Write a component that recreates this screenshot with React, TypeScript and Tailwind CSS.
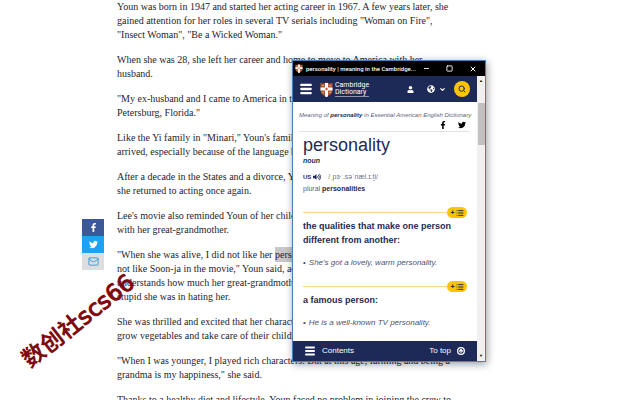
import React from 'react';
import { FaFacebookF, FaTwitter, FaUser, FaVolumeUp, FaGlobeAmericas } from 'react-icons/fa';
import { Mail, Search, ChevronDown, Minus, Square, X, Menu, List, CircleArrowUp } from 'lucide-react';

interface ParagraphProps {
  lines: React.ReactNode[];
}

const paragraphs: React.ReactNode[][] = [
  [
    'Youn was born in 1947 and started her acting career in 1967. A few years later, she',
    'gained attention for her roles in several TV serials including "Woman on Fire",',
    '"Insect Woman", "Be a Wicked Woman."',
  ],
  ['When she was 28, she left her career and home to move to America with her', 'husband.'],
  ['"My ex-husband and I came to America in the 1970s and lived in St.', 'Petersburg, Florida."'],
  ['Like the Yi family in "Minari," Youn\'s family had a hard time when they', 'arrived, especially because of the language barrier.'],
  ['After a decade in the States and a divorce, Youn went home, where', 'she returned to acting once again.'],
  ["Lee's movie also reminded Youn of her childhood and her time", 'with her great-grandmother.'],
  [
    <>"When she was alive, I did not like her <mark className="bg-[#c8c8c8] py-[2px] text-inherit">personality</mark>. She was</>,
    'not like Soon-ja in the movie," Youn said, adding that she now',
    'understands how much her great-grandmother loved her, and how',
    'stupid she was in hating her.',
  ],
  ['She was thrilled and excited that her character would help them', 'grow vegetables and take care of their children.'],
  ['"When I was younger, I played rich characters. But at this age, farming and being a', 'grandma is my happiness," she said.'],
  ['Thanks to a healthy diet and lifestyle, Youn faced no problem in joining the crew to'],
];

const senses = [
  { definition: 'the qualities that make one person different from another:', example: "She's got a lovely, warm personality." },
  { definition: 'a famous person:', example: 'He is a well-known TV personality.' },
];

function Paragraph({ lines }: ParagraphProps) {
  return (
    <p className="whitespace-nowrap">
      {lines.map((line, i) => (
        <span key={i} className="block">{line}</span>
      ))}
    </p>
  );
}

function Shield({ className }: { className: string }) {
  return (
    <svg viewBox="0 0 26 30" className={className} aria-hidden="true">
      <path d="M1 2q6 2 12-1 6 3 12 1v14c0 7-5 11-12 13C6 27 1 23 1 16z" fill="#b4552f" />
      <path d="M10 2h6v27l-3 1-3-1zM1 11h24v6H1z" fill="#fff" />
      <path d="M13 11l3 3-3 3-3-3z" fill="#b4552f" />
      <path d="M4 6h4v2H4zM18 6h4v2h-4zM4 20h4v2H4zM18 20h4v2h-4z" fill="#dc9673" />
    </svg>
  );
}

function ShareRail() {
  return (
    <nav aria-label="Share" className="mt-[219px] flex w-[22px] shrink-0 flex-col self-start">
      <a href="#facebook" aria-label="Facebook" className="flex h-[17px] items-center justify-center bg-[#3b5998] text-white">
        <FaFacebookF className="size-[9px]" />
      </a>
      <a href="#twitter" aria-label="Twitter" className="flex h-[17px] items-center justify-center bg-[#1da1f2] text-white">
        <FaTwitter className="size-[9px]" />
      </a>
      <a href="#email" aria-label="Email" className="flex h-[17px] items-center justify-center bg-[#dedede] text-[#2f9bdc]">
        <Mail className="size-[11px]" strokeWidth={2} />
      </a>
    </nav>
  );
}

function TitleBar() {
  return (
    <div className="flex h-[15px] items-center bg-black pl-[2px] text-white">
      <Shield className="mr-[3px] h-[9px] w-2 shrink-0" />
      <span className="min-w-0 grow whitespace-nowrap font-[Roboto,sans-serif] text-[6px] font-medium">personality | meaning in the Cambridge...</span>
      <div className="flex shrink-0 gap-4 pr-2">
        <button aria-label="Minimize"><Minus className="size-[7px]" strokeWidth={3} /></button>
        <button aria-label="Maximize"><Square className="size-[7px]" strokeWidth={3} /></button>
        <button aria-label="Close"><X className="size-2" strokeWidth={3} /></button>
      </div>
    </div>
  );
}

function SiteHeader() {
  return (
    <header className="flex h-[26px] items-center bg-[#1d2a57] pl-[6px] pr-[7px] text-white">
      <button aria-label="Menu"><Menu className="size-[14px]" strokeWidth={4} /></button>
      <a href="#home" className="ml-[7px] flex items-center gap-[2px]">
        <Shield className="h-[15px] w-[13px]" />
        <span className="font-[Roboto,sans-serif] text-[7px] leading-[7px]">
          <span className="block">Cambridge</span>
          <span className="block border-b border-[#8b93ad]">Dictionary</span>
        </span>
      </a>
      <div className="ml-auto flex items-center">
        <button aria-label="Log in" className="mr-[13px]"><FaUser className="size-[7px]" /></button>
        <button aria-label="Language" className="mr-1 flex items-center gap-1">
          <FaGlobeAmericas className="size-2" />
          <ChevronDown className="size-[7px]" strokeWidth={4} />
        </button>
        <button aria-label="Search" className="ml-1 flex size-4 items-center justify-center rounded-full bg-[#fec400] text-[#1d2a57]">
          <Search className="size-2" strokeWidth={3} />
        </button>
      </div>
    </header>
  );
}

function DictionaryWindow() {
  return (
    <section
      aria-label="Cambridge Dictionary"
      className="absolute left-[292px] top-[60px] w-[194px] border border-[#4c7fb5] bg-white font-['Liberation_Sans',sans-serif] text-[#1d2a57] shadow-[1px_2px_8px_rgba(0,0,0,0.4)]"
    >
      <TitleBar />
      <div className="flex">
        <div className="min-w-0 grow">
          <SiteHeader />
          <main className="h-[239px] overflow-hidden pl-[10px] pr-[7px] pt-[9px]">
            <div className="-ml-1 whitespace-nowrap text-[6px] italic leading-[8px] text-[#5b6380]">
              Meaning of <b className="text-[#1d2a57]">personality</b> in Essential American English Dictionary
            </div>
            <div className="-ml-1 flex h-[13px] justify-end gap-[11px] border-b border-[#e2e2e2] pr-1 pt-[2px] text-black">
              <a href="#fb" aria-label="Share on Facebook"><FaFacebookF className="size-2" /></a>
              <a href="#tw" aria-label="Share on Twitter"><FaTwitter className="size-2" /></a>
            </div>
            <h1 className="mt-[2px] text-[18px] leading-[22px]">personality</h1>
            <div className="text-[7px] font-bold italic leading-[10px]">noun</div>
            <div className="mt-[6px] flex items-center gap-[2px] text-[7px] leading-[10px]">
              <span className="text-[6px] font-bold">US</span>
              <button aria-label="Listen"><FaVolumeUp className="size-2" /></button>
              <span className="ml-[5px] text-[#6c738c]">/ˌpɝː.səˈnæl.ɪ.t̬i/</span>
            </div>
            <div className="mt-[2px] text-[7px] leading-[10px]">
              <span className="text-[#5b6380]">plural</span> <b>personalities</b>
            </div>
            <div className="mt-[13px] flex flex-col gap-[11px]">
              {senses.map((sense) => (
                <article key={sense.example}>
                  <div className="flex h-[11px] items-center">
                    <div className="h-px grow bg-[#fbd98c]" />
                    <button aria-label="Add to word list" className="mr-[3px] flex h-[11px] w-5 items-center justify-center gap-px rounded-full bg-[#fec400] text-[#1d2a57]">
                      <b className="text-[7px] leading-[8px]">+</b>
                      <List className="size-2" strokeWidth={3} />
                    </button>
                  </div>
                  <h2 className="mr-3 mt-px text-[9px] font-bold leading-[14px]">{sense.definition}</h2>
                  <p className="mt-[9px] flex gap-[3px] whitespace-nowrap text-[8px] leading-[14px] text-[#4a5270]">
                    <span>•</span>
                    <i>{sense.example}</i>
                  </p>
                </article>
              ))}
            </div>
          </main>
          <footer className="flex h-5 items-center bg-[#1d2a57] pl-[11px] pr-3 text-[8px] text-white">
            <button className="flex items-center gap-[6px]"><Menu className="size-3" strokeWidth={4} />Contents</button>
            <button className="ml-auto flex items-center gap-[6px]">To top<CircleArrowUp className="size-2" strokeWidth={4} /></button>
          </footer>
        </div>
        <div className="flex w-2 shrink-0 flex-col items-center bg-[#f0f0f0] text-[4px] leading-[10px] text-black">
          <span>▲</span>
          <div className="mt-[17px] h-[42px] w-[7px] bg-[#c1c1c1]" />
          <span className="mt-auto">▼</span>
        </div>
      </div>
    </section>
  );
}

export default function App() {
  return (
    <div className="relative h-screen overflow-hidden bg-white">
      <div className="flex h-full pl-[82px]">
        <ShareRail />
        <article className="ml-[13px] flex min-w-0 grow flex-col gap-[11px] font-['Liberation_Serif',serif] text-[10px] leading-[14px] text-[#1c2530]">
          {paragraphs.map((lines, i) => (
            <Paragraph key={i} lines={lines} />
          ))}
        </article>
      </div>
      <div className="absolute left-[10px] top-[304px] -rotate-38 whitespace-nowrap font-['DejaVu_Sans','Noto_Sans_CJK_SC',sans-serif] text-[23px] leading-[30px] text-[#7d0a0c]">
        <span className="font-['Noto_Sans_CJK_SC',sans-serif] font-bold">数创社</span>
        <span className="[-webkit-text-stroke:1px_#7d0a0c]">scs66</span>
      </div>
      <DictionaryWindow />
    </div>
  );
}
